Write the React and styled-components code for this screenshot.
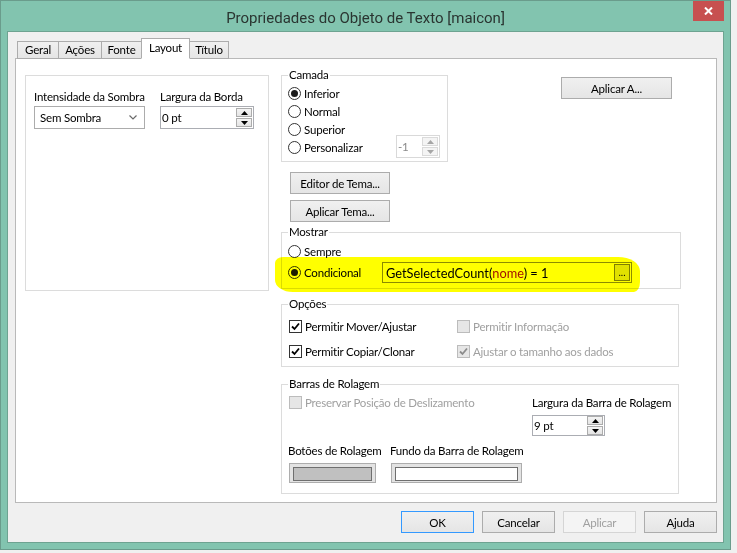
import React from 'react'
import styled, { createGlobalStyle } from 'styled-components'

const GlobalStyle = createGlobalStyle`
  html, body { margin: 0; padding: 0; background: #f0f0f0; }
  body {
    font-family: Lato, Roboto, "Liberation Sans", sans-serif;
    font-size: 11.5px;
    letter-spacing: -0.2px;
    color: #000;
  }
  * { box-sizing: border-box; }
`

const Window = styled.div`
  width: 731px;
  height: 550px;
  background: #82c4af;
  border: 1px solid #6a9c8c;
  display: flex;
  flex-direction: column;
  padding: 0 6px 6px;
`

const TitleBar = styled.div`
  height: 30px;
  flex: none;
  display: grid;
  grid-template-columns: 1fr auto 1fr;
  align-items: start;
`

const Title = styled.div`
  grid-column: 2;
  font-family: Roboto, "Liberation Sans", sans-serif;
  font-size: 15px;
  letter-spacing: 0;
  line-height: 30px;
  padding-top: 2px;
  color: #2a3531;
`

const CloseButton = styled.div`
  grid-column: 3;
  justify-self: end;
  width: 31px;
  height: 20px;
  background: #c75050;
  color: #fff;
  display: flex;
  align-items: center;
  justify-content: center;
`

const Client = styled.div`
  flex: 1;
  background: #f0f0f0;
  border: 1px solid #6ea391;
  display: flex;
  flex-direction: column;
  padding: 7px 6px 9px 7px;
`

const TabStrip = styled.div`
  height: 20px;
  flex: none;
  display: flex;
  align-items: flex-end;
  padding-left: 2px;
  margin-bottom: -1px;
  position: relative;
  z-index: 1;
`

const Tab = styled.div`
  width: ${p => p.$w}px;
  height: ${p => (p.$active ? 21 : 18)}px;
  margin-left: -1px;
  border: 1px solid #acacac;
  border-bottom-color: ${p => (p.$active ? '#fff' : '#acacac')};
  background: ${p => (p.$active ? '#fff' : 'linear-gradient(#f0f0f0, #e5e5e5)')};
  display: flex;
  justify-content: center;
  padding-top: ${p => (p.$active ? 2 : 1)}px;
  position: relative;
  z-index: ${p => (p.$active ? 2 : 1)};
  &:first-child { margin-left: 0; }
`

const Panel = styled.div`
  flex: 1;
  background: #fff;
  border: 1px solid #b9b9b9;
  display: flex;
  gap: 12px;
  padding: 9px 0 0 9px;
`

const LeftBox = styled.div`
  width: 244px;
  height: 216px;
  margin-top: 7px;
  border: 1px solid #dcdcdc;
  display: flex;
  align-items: flex-start;
  gap: 15px;
  padding: 13px 0 0 8px;
`

const Field = styled.div`
  display: flex;
  flex-direction: column;
  width: ${p => (p.$w ? `${p.$w}px` : 'auto')};
  flex: none;
`

const FieldLabel = styled.div`
  line-height: 16px;
  white-space: nowrap;
  margin-top: ${p => p.$top ?? 0}px;
  margin-bottom: ${p => p.$gap ?? 1}px;
`

const Dropdown = styled.div`
  width: 111px;
  height: 23px;
  border: 1px solid #acacac;
  background: #fff;
  display: flex;
  align-items: center;
  justify-content: space-between;
  padding: 0 7px 0 5px;
`

const SpinBox = styled.div`
  width: ${p => p.$w}px;
  height: ${p => p.$h}px;
  flex: none;
  border: 1px solid ${p => (p.$disabled ? '#d9d9d9' : '#abadb3')};
  background: #fff;
  display: flex;
  align-items: center;
  padding: 0 1px 0 1px;
  margin: ${p => p.$margin || '0'};
  color: ${p => (p.$disabled ? '#8a8a8a' : '#000')};
`

const SpinValue = styled.span`
  flex: 1;
  padding-bottom: 1px;
`

const SpinButtons = styled.div`
  width: 16px;
  display: flex;
  flex-direction: column;
  gap: 1px;
`

const SpinButton = styled.span`
  height: 9px;
  border: 1px solid ${p => (p.$disabled ? '#dadada' : '#acacac')};
  background: ${p => (p.$disabled ? '#f4f4f4' : 'linear-gradient(#f4f4f4, #e4e4e4)')};
  display: flex;
  align-items: center;
  justify-content: center;
`

const RightColumn = styled.div`
  width: 400px;
  display: flex;
  flex-direction: column;
`

const TopRow = styled.div`
  display: flex;
  align-items: flex-start;
`

const Group = styled.fieldset`
  margin: ${p => p.$mt ?? 0}px 0 0;
  min-width: 0;
  width: ${p => p.$w}px;
  border: 1px solid #dcdcdc;
  padding: ${p => p.$pad};
`

const Legend = styled.legend`
  padding: 0 1px;
  line-height: 14px;
`

const OptionRow = styled.div`
  display: flex;
  align-items: center;
  gap: ${p => p.$gap ?? 3}px;
  height: ${p => p.$h ?? 18}px;
  margin-top: ${p => p.$mt ?? 0}px;
  color: ${p => (p.$disabled ? '#a0a0a0' : '#000')};
  position: relative;
`

const OptionText = styled.span`
  white-space: nowrap;
  width: ${p => (p.$w ? `${p.$w}px` : 'auto')};
  flex: none;
`

const RadioCircle = styled.span`
  width: 13px;
  height: 13px;
  flex: none;
  border-radius: 50%;
  border: 1px solid #333;
  background: #fff;
  display: flex;
  align-items: center;
  justify-content: center;
  &::after {
    content: '';
    width: 7px;
    height: 7px;
    border-radius: 50%;
    background: #1b1b1b;
    display: ${p => (p.$on ? 'block' : 'none')};
  }
`

const CheckSquare = styled.span`
  width: 13px;
  height: 13px;
  flex: none;
  margin-left: 1px;
  border: 1px solid ${p => (p.$disabled ? '#bcbcbc' : '#333')};
  background: ${p => (p.$disabled ? '#e6e6e6' : '#fff')};
  display: flex;
  align-items: center;
  justify-content: center;
`

const Button = styled.div`
  width: ${p => p.$w}px;
  height: 22px;
  flex: none;
  margin: ${p => p.$margin || '0'};
  border: 1px solid ${p => (p.$default ? '#3399ff' : p.$disabled ? '#d5d5d5' : '#acacac')};
  background: ${p => (p.$disabled ? '#f4f4f4' : 'linear-gradient(#f0f0f0, #e5e5e5)')};
  color: ${p => (p.$disabled ? '#a0a0a0' : '#000')};
  display: flex;
  align-items: center;
  justify-content: center;
`

const ExprBox = styled.div`
  width: 250px;
  height: 21px;
  border: 1px solid #8c8c8c;
  background: #fff;
  display: flex;
  align-items: center;
  padding: 0 1px 0 3px;
  font-size: 12.8px;
  letter-spacing: 0;
`

const ExprText = styled.span`
  flex: 1;
  white-space: nowrap;
`

const FieldName = styled.span`
  color: #a31515;
`

const DotsButton = styled.span`
  width: 16px;
  height: 17px;
  border: 1px solid #7f7f7f;
  background: #e1e1e1;
  font-size: 10px;
  display: flex;
  align-items: flex-end;
  justify-content: center;
  padding-bottom: 2px;
`

const Highlight = styled.span`
  position: absolute;
  left: -13px;
  top: -5px;
  width: 365px;
  height: 35px;
  background: #ffff00;
  border-radius: 8px 22px 6px 18px / 6px 14px 10px 12px;
  mix-blend-mode: multiply;
  pointer-events: none;
  z-index: 3;
`

const OptionsGrid = styled.div`
  display: grid;
  grid-template-columns: 168px 1fr;
  row-gap: 7px;
`

const ScrollTop = styled.div`
  display: flex;
  align-items: flex-start;
`

const ScrollBottom = styled.div`
  display: flex;
  margin-top: 7px;
`

const Swatch = styled.div`
  width: ${p => p.$w}px;
  height: 20px;
  border: 1px solid #adadad;
  background: #e3e3e3;
  padding: 3px;
  margin-left: 1px;
  &::after {
    content: '';
    display: block;
    height: 100%;
    border: 1px solid #6f6f6f;
    background: ${p => p.$color};
  }
`

const ButtonBar = styled.div`
  display: flex;
  justify-content: flex-end;
  gap: 8px;
  margin-top: 8px;
  flex: none;
`

const Arrow = ({ up, disabled }) => (
  <svg width="7" height="4" viewBox="0 0 7 4">
    <polygon points={up ? '0,4 7,4 3.5,0' : '0,0 7,0 3.5,4'} fill={disabled ? '#a6a6a6' : '#000'} />
  </svg>
)

const Spin = ({ value, w, h = 23, disabled, margin }) => (
  <SpinBox $w={w} $h={h} $disabled={disabled} $margin={margin}>
    <SpinValue>{value}</SpinValue>
    <SpinButtons>
      <SpinButton $disabled={disabled}><Arrow up disabled={disabled} /></SpinButton>
      <SpinButton $disabled={disabled}><Arrow disabled={disabled} /></SpinButton>
    </SpinButtons>
  </SpinBox>
)

const Radio = ({ on, label }) => (
  <OptionRow>
    <RadioCircle $on={on} />
    <OptionText>{label}</OptionText>
  </OptionRow>
)

const Check = ({ on, disabled, label }) => (
  <OptionRow $disabled={disabled}>
    <CheckSquare $disabled={disabled}>
      {on && (
        <svg width="9" height="9" viewBox="0 0 9 9">
          <polyline points="1,4.5 3.5,7 8,1.5" fill="none" stroke={disabled ? '#8c8c8c' : '#000'} strokeWidth="1.8" />
        </svg>
      )}
    </CheckSquare>
    <OptionText>{label}</OptionText>
  </OptionRow>
)

const tabs = [
  { name: 'Geral', w: 42 },
  { name: 'Ações', w: 44 },
  { name: 'Fonte', w: 41 },
  { name: 'Layout', w: 49, active: true },
  { name: 'Título', w: 40 },
]

const App = () => {
  return (
    <>
      <GlobalStyle />
      <Window>
        <TitleBar>
          <Title>Propriedades do Objeto de Texto [maicon]</Title>
          <CloseButton>
            <svg width="9" height="8" viewBox="0 0 9 8">
              <path d="M1 0.5 L8 7.5 M8 0.5 L1 7.5" stroke="#fff" strokeWidth="2" />
            </svg>
          </CloseButton>
        </TitleBar>
        <Client>
          <TabStrip>
            {tabs.map(t => (
              <Tab key={t.name} $w={t.w} $active={t.active}>{t.name}</Tab>
            ))}
          </TabStrip>
          <Panel>
            <LeftBox>
              <Field $w={111}>
                <FieldLabel>Intensidade da Sombra</FieldLabel>
                <Dropdown>
                  <span>Sem Sombra</span>
                  <svg width="8" height="5" viewBox="0 0 8 5">
                    <polyline points="0.5,0.5 4,4 7.5,0.5" fill="none" stroke="#6a6a6a" strokeWidth="1.2" />
                  </svg>
                </Dropdown>
              </Field>
              <Field>
                <FieldLabel>Largura da Borda</FieldLabel>
                <Spin value="0 pt" w={94} />
              </Field>
            </LeftBox>

            <RightColumn>
              <TopRow>
                <Group $w={167} $pad="2px 6px 5px">
                  <Legend>Camada</Legend>
                  <Radio on label="Inferior" />
                  <Radio label="Normal" />
                  <Radio label="Superior" />
                  <OptionRow>
                    <RadioCircle />
                    <OptionText $w={89}>Personalizar</OptionText>
                    <Spin value="-1" w={44} disabled margin="-3px 0 -2px" />
                  </OptionRow>
                </Group>
                <Button $w={111} $margin="9px 0 0 113px">Aplicar A...</Button>
              </TopRow>

              <Button $w={100} $margin="10px 0 0 9px">Editor de Tema...</Button>
              <Button $w={100} $margin="6px 0 0 9px">Aplicar Tema...</Button>

              <Group $w={400} $mt={3} $pad="3px 6px 5px">
                <Legend>Mostrar</Legend>
                <Radio label="Sempre" />
                <OptionRow $h={21} $mt={2}>
                  <Highlight />
                  <RadioCircle $on />
                  <OptionText $w={75}>Condicional</OptionText>
                  <ExprBox>
                    <ExprText>GetSelectedCount(<FieldName>nome</FieldName>) = 1</ExprText>
                    <DotsButton>...</DotsButton>
                  </ExprBox>
                </OptionRow>
              </Group>

              <Group $w={398} $mt={8} $pad="6px 6px 6px">
                <Legend>Opções</Legend>
                <OptionsGrid>
                  <Check on label="Permitir Mover/Ajustar" />
                  <Check disabled label="Permitir Informação" />
                  <Check on label="Permitir Copiar/Clonar" />
                  <Check on disabled label="Ajustar o tamanho aos dados" />
                </OptionsGrid>
              </Group>

              <Group $w={398} $mt={10} $pad="2px 6px 10px">
                <Legend>Barras de Rolagem</Legend>
                <ScrollTop>
                  <Field $w={244}>
                    <Check disabled label="Preservar Posição de Deslizamento" />
                  </Field>
                  <Field>
                    <FieldLabel $top={2} $gap={4}>Largura da Barra de Rolagem</FieldLabel>
                    <Spin value="9 pt" w={73} h={21} />
                  </Field>
                </ScrollTop>
                <ScrollBottom>
                  <Field $w={102}>
                    <FieldLabel $gap={4}>Botões de Rolagem</FieldLabel>
                    <Swatch $w={87} $color="#c0c0c0" />
                  </Field>
                  <Field>
                    <FieldLabel $gap={4}>Fundo da Barra de Rolagem</FieldLabel>
                    <Swatch $w={131} $color="#fff" />
                  </Field>
                </ScrollBottom>
              </Group>
            </RightColumn>
          </Panel>
          <ButtonBar>
            <Button $w={73} $default>OK</Button>
            <Button $w={73}>Cancelar</Button>
            <Button $w={73} $disabled>Aplicar</Button>
            <Button $w={73}>Ajuda</Button>
          </ButtonBar>
        </Client>
      </Window>
    </>
  )
}

export default App
